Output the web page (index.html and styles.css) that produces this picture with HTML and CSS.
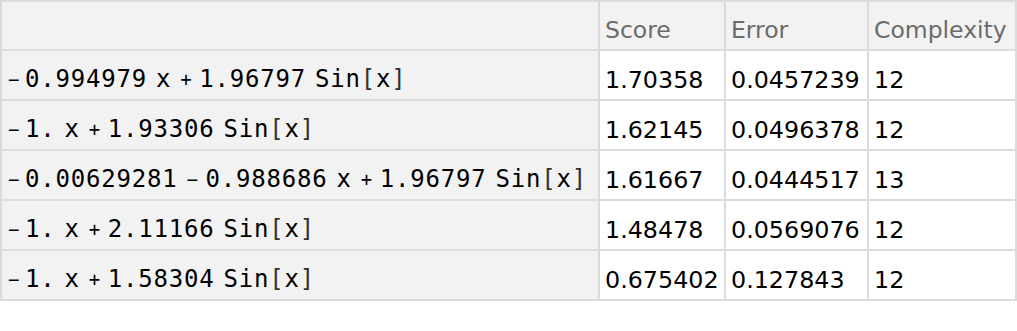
FILE: index.html
```html
<!DOCTYPE html>
<html>
<head>
<meta charset="utf-8">
<link rel="stylesheet" href="styles.css">
</head>
<body>
<div class="table">
  <div class="cell head"></div>
  <div class="cell head label">Score</div>
  <div class="cell head label">Error</div>
  <div class="cell head label">Complexity</div>

  <div class="cell expr"><span class="op lead">−</span>0.994979<span class="sp"></span>x<span class="op">+</span>1.96797<span class="sp"></span>Sin<span class="br">[</span>x<span class="br">]</span></div>
  <div class="cell num">1.70358</div>
  <div class="cell num">0.0457239</div>
  <div class="cell num">12</div>

  <div class="cell expr"><span class="op lead">−</span>1.<span class="sp"></span>x<span class="op">+</span>1.93306<span class="sp"></span>Sin<span class="br">[</span>x<span class="br">]</span></div>
  <div class="cell num">1.62145</div>
  <div class="cell num">0.0496378</div>
  <div class="cell num">12</div>

  <div class="cell expr"><span class="op lead">−</span>0.00629281<span class="op">−</span>0.988686<span class="sp"></span>x<span class="op">+</span>1.96797<span class="sp"></span>Sin<span class="br">[</span>x<span class="br">]</span></div>
  <div class="cell num">1.61667</div>
  <div class="cell num">0.0444517</div>
  <div class="cell num">13</div>

  <div class="cell expr"><span class="op lead">−</span>1.<span class="sp"></span>x<span class="op">+</span>2.11166<span class="sp"></span>Sin<span class="br">[</span>x<span class="br">]</span></div>
  <div class="cell num">1.48478</div>
  <div class="cell num">0.0569076</div>
  <div class="cell num">12</div>

  <div class="cell expr"><span class="op lead">−</span>1.<span class="sp"></span>x<span class="op">+</span>1.58304<span class="sp"></span>Sin<span class="br">[</span>x<span class="br">]</span></div>
  <div class="cell num">0.675402</div>
  <div class="cell num">0.127843</div>
  <div class="cell num">12</div>
</div>
</body>
</html>
```
FILE: styles.css
```css
html, body {
  margin: 0;
  padding: 0;
  background: #ffffff;
}

.table {
  display: grid;
  grid-template-columns: 596px 124px 141px 146px;
  grid-template-rows: 47px repeat(5, 48px);
  gap: 2px;
  padding: 2px;
  background: #dcdcdc;
  width: 1017px;
  box-sizing: border-box;
}

.cell {
  background: #ffffff;
  display: flex;
  align-items: center;
  padding: 0 0 0 5px;
  white-space: nowrap;
  overflow: hidden;
}

.head {
  background: #f2f2f2;
}

.label {
  font-family: "DejaVu Sans", Verdana, sans-serif;
  font-size: 23.5px;
  color: #6b6b6b;
  padding-top: 9px;
}

.num {
  font-family: "DejaVu Sans", Verdana, sans-serif;
  font-size: 23.8px;
  color: #000000;
  padding-top: 9px;
}

.expr {
  background: #f2f2f2;
  font-family: "DejaVu Sans Mono", monospace;
  font-size: 24px;
  letter-spacing: 0.8px;
  color: #000000;
  padding-top: 8px;
}

.op {
  display: inline-block;
  font-size: 19px;
  letter-spacing: 0;
  width: 11px;
  margin: 0 8px 0 9px;
  text-align: center;
}

.op.lead {
  margin: 0 6px 0 1px;
}

.sp {
  display: inline-block;
  width: 9px;
}

.br {
  font-weight: 300;
  color: #333333;
}
```
